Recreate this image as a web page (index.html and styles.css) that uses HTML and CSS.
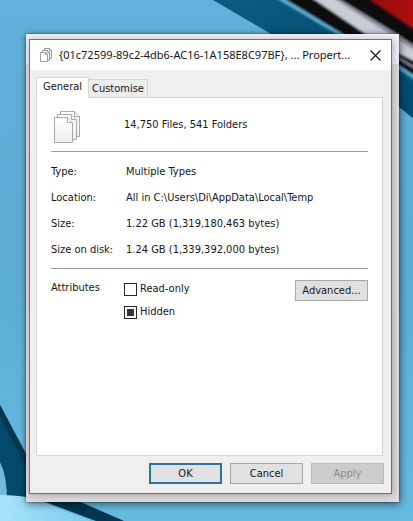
FILE: index.html
```html
<!DOCTYPE html>
<html lang="en-GB">
<head>
<meta charset="utf-8">
<meta name="viewport" content="width=device-width, initial-scale=1">
<title>Properties</title>
<link rel="stylesheet" href="styles.css">
</head>
<body>
<svg class="wallpaper" viewBox="0 0 413 521" preserveAspectRatio="none" aria-hidden="true">
  <defs>
    <linearGradient id="sky" x1="0" y1="0" x2="0" y2="1">
      <stop offset="0" stop-color="#62b1db"/><stop offset=".5" stop-color="#5cacd4"/><stop offset="1" stop-color="#66badf"/>
    </linearGradient>
    <linearGradient id="deep" x1="0" y1="0" x2="1" y2="1">
      <stop offset="0" stop-color="#0b5a80"/><stop offset="1" stop-color="#024a6d"/>
    </linearGradient>
    <linearGradient id="pale" x1="0" y1="0" x2="1" y2="0">
      <stop offset="0" stop-color="#a9e3f9"/><stop offset="1" stop-color="#7accef"/>
    </linearGradient>
    <linearGradient id="red" x1="0" y1="0" x2="1" y2="0">
      <stop offset="0" stop-color="#8c0d12"/><stop offset="1" stop-color="#b30b0e"/>
    </linearGradient>
    <filter id="soft"><feGaussianBlur stdDeviation="1"/></filter>
  </defs>
  <rect width="413" height="521" fill="url(#sky)"/>
  <path d="M213 0H420V124L399 107 271 34Z" fill="url(#deep)"/>
  <g filter="url(#soft)">
    <path d="M272 -4H420V84L400 70 340 36Z" fill="#63acd1"/>
    <path d="M280 -4H420V79L400 66 346 36Z" fill="#08080e"/>
    <path d="M309 -4H334L395 33L420 50V64L398 53L364 33Z" fill="#c9ccd7"/>
    <path d="M330 -4H334L395 33L420 50V54L391 35Z" fill="#8f929e"/>
    <path d="M365 -4H420V33Z" fill="url(#red)"/>
    <path d="M397 57L420 71" stroke="#8f96a4" stroke-width="2"/>
  </g>
  <path d="M0 405L26 454V500H0Z" fill="#02496c"/>
  <path d="M0 405L26 454V467L0 416Z" fill="#043553"/>
  <path d="M0 462Q7 476 7 500H0Z" fill="#73b8d7"/>
  <path d="M40 500H76L124 521H96Z" fill="#04344e"/>
  <path d="M0 495Q34 495 50 505L91 521H0Z" fill="url(#pale)"/>
</svg>
<main class="desktop">
  <div class="frame">
    <section class="dialog" aria-labelledby="title">
      <header class="titlebar">
        <svg class="title-icon" viewBox="0 0 12 14" fill="#fff" stroke="#9a9a9a" aria-hidden="true">
          <path d="M4.500 .5H9.500L11.500 2.500V10.500H4.500Z"/><path d="M9.500 .5V2.500H11.500" fill="none"/>
          <path d="M2.500 2.500H7.500L9.500 4.500V12.500H2.500Z"/><path d="M7.500 2.500V4.500H9.500" fill="none"/>
          <path d="M.5 4.500H5.500L7.500 6.500V13.500H.5Z"/><path d="M5.500 4.500V6.500H7.500" fill="none"/>
        </svg>
        <h1 class="title" id="title">{01c72599-89c2-4db6-AC16-1A158E8C97BF}, ... Propert...</h1>
        <button class="close" type="button" aria-label="Close">
          <svg viewBox="0 0 11 11" stroke="#111" stroke-width="1.100" aria-hidden="true"><path d="M.5 .5L10.500 10.500M10.500 .5L.5 10.500"/></svg>
        </button>
      </header>
      <div class="tabs" role="tablist">
        <button class="tab tab-active" type="button" role="tab" aria-selected="true">General</button>
        <button class="tab" type="button" role="tab" aria-selected="false">Customise</button>
      </div>
      <div class="panel" role="tabpanel">
        <div class="summary">
          <svg class="files" viewBox="0 0 26 32" stroke="#a8a8a8" aria-hidden="true">
            <defs><linearGradient id="paper" x1="0" y1="0" x2="0" y2="1"><stop offset="0" stop-color="#fff"/><stop offset="1" stop-color="#ededed"/></linearGradient></defs>
            <g fill="url(#paper)">
              <path d="M6.500 .5H20.500L25.500 5.500V25.500H6.500Z"/><path d="M20.500 .5V5.500H25.500"/>
              <path d="M3.500 3.500H17.500L22.500 8.500V28.500H3.500Z"/><path d="M17.500 3.500V8.500H22.500"/>
              <path d="M.5 6.500H13.500L18.500 11.500V31.500H.5Z"/><path d="M13.500 6.500V11.500H18.500"/>
            </g>
          </svg>
          <span>14,750 Files, 541 Folders</span>
        </div>
        <dl class="details">
          <dt>Type:</dt><dd>Multiple Types</dd>
          <dt>Location:</dt><dd>All in C:\Users\Di\AppData\Local\Temp</dd>
          <dt>Size:</dt><dd>1.22 GB (1,319,180,463 bytes)</dd>
          <dt>Size on disk:</dt><dd>1.24 GB (1,339,392,000 bytes)</dd>
        </dl>
        <div class="attributes" role="group" aria-labelledby="attributes">
          <span id="attributes">Attributes</span>
          <div class="checks">
            <label class="check"><input type="checkbox">Read-only</label>
            <label class="check"><input type="checkbox" checked>Hidden</label>
          </div>
          <button class="button" type="button">Advanced...</button>
        </div>
      </div>
      <footer class="actions">
        <button class="button button-default" type="button">OK</button>
        <button class="button" type="button">Cancel</button>
        <button class="button" type="button" disabled>Apply</button>
      </footer>
    </section>
  </div>
</main>
</body>
</html>
```
FILE: styles.css
```css
* {
  box-sizing: border-box;
}

body {
  margin: 0;
  background: #5fb0d8;
  color: #161616;
  font: 11px/16px "DejaVu Sans Condensed", "Noto Sans", sans-serif;
}

button {
  margin: 0;
  color: inherit;
  font: inherit;
}

.wallpaper {
  position: absolute;
  inset: 0;
  z-index: -1;
  width: 100%;
  height: 100%;
}

.desktop {
  display: flex;
  min-height: 100vh;
  padding: 34px 14px 19px 26px;
}

.frame {
  display: flex;
  flex: 1;
  min-width: 0;
  padding: 5px 7px 8px 3px;
  background: linear-gradient(#edf1f7 0 30px, #dcdcde 30px);
  box-shadow: 0 0 2px #0008, 1px 2px 8px #0008;
}

.dialog {
  display: flex;
  flex: 1;
  flex-direction: column;
  min-width: 0;
  border: 1px solid #b0555c;
  background: #efefef;
  box-shadow: 1px 1px 7px #5a202855;
}

.titlebar {
  display: flex;
  align-items: center;
  height: 30px;
  padding: 0 10px 0 10px;
  background: #fff;
}

.title-icon {
  width: 12px;
  height: 14px;
}

.title {
  flex: 1;
  min-width: 0;
  margin: 0 0 0 7px;
  overflow: hidden;
  font: 11px/18px "Noto Sans", sans-serif;
  white-space: nowrap;
}

.close {
  display: flex;
  padding: 0;
  border: 0;
  background: none;
}

.close svg {
  width: 11px;
  height: 11px;
}

.tabs {
  display: flex;
  align-items: flex-end;
  padding: 7px 6px 0;
}

.tab {
  height: 18px;
  padding: 0 3px;
  border: 1px solid #d5d5d5;
  border-width: 1px 1px 0 0;
  background: #ededed;
}

.tab-active {
  height: 21px;
  z-index: 1;
  margin-bottom: -1px;
  padding: 0 6px 2px;
  border-left-width: 1px;
  background: #fff;
}

.panel {
  flex: 1;
  margin: 0 8px 0 6px;
  padding: 13px 14px;
  border: 1px solid #d5d5d5;
  background: #fff;
}

.summary {
  display: grid;
  grid-template-columns: 70px 1fr;
  column-gap: 3px;
  height: 41px;
  border-bottom: 1px solid #9b9b9b;
}

.summary span {
  padding-top: 6px;
}

.files {
  width: 26px;
  height: 32px;
  margin-left: 3px;
}

.details {
  display: grid;
  grid-template-columns: 75px 1fr;
  row-gap: 10px;
  margin: 0;
  padding: 12px 0 10px;
  border-bottom: 1px solid #9b9b9b;
}

.details dd {
  margin: 0;
}

.attributes {
  display: grid;
  grid-template-columns: 70px 1fr 73px;
  column-gap: 3px;
  align-items: start;
  padding-top: 11px;
}

.checks {
  display: grid;
  row-gap: 7px;
  justify-items: start;
  padding-top: 1px;
}

.check {
  display: flex;
  align-items: center;
  gap: 3px;
}

.check input {
  width: 13px;
  height: 13px;
  margin: 0;
  border: 1px solid #262626;
  background: #fff;
  appearance: none;
}

.check input:checked {
  padding: 2px;
  background: #333 content-box;
}

.button {
  width: 73px;
  height: 21px;
  padding: 0;
  border: 1px solid #a8a8a8;
  background: #e1e1e1;
}

.button-default {
  border: 2px solid #2f739c;
}

.button:disabled {
  border-color: #bcbcbc;
  background: #cccccc;
  color: #8b8b8b;
}

.actions {
  display: flex;
  justify-content: flex-end;
  gap: 8px;
  padding: 7px 7px 9px;
}
```
